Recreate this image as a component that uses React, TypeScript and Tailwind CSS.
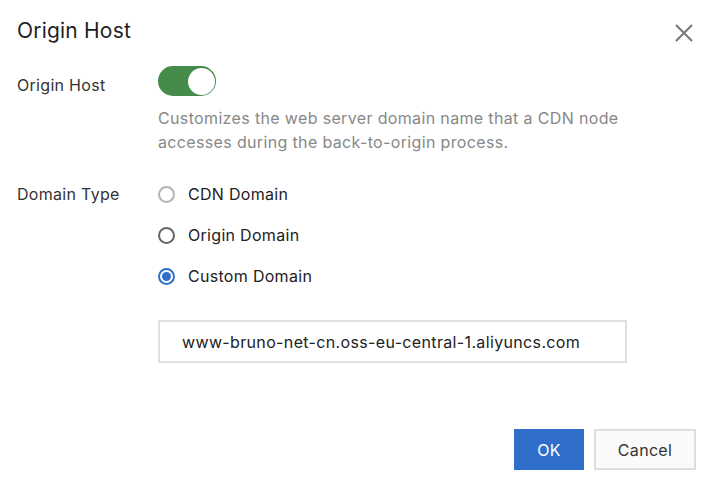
import React from "react";

export default function App() {
  const font = { fontFamily: 'Inter, "Liberation Sans", Arial, sans-serif' };
  return (
    <div className="w-[726px] h-[484px] bg-white relative text-[#333]" style={font}>
      <div className="flex items-center justify-between pl-[17px] pr-[32px] pt-[16px] h-[46px]">
        <h1 className="text-[21px] leading-[26px] text-[#1f1f1f] tracking-[0.2px]">Origin Host</h1>
        <svg width="20" height="20" viewBox="0 0 20 20" className="text-[#777] mt-[4px]">
          <path d="M2 2 L18 18 M18 2 L2 18" stroke="currentColor" strokeWidth="2" />
        </svg>
      </div>

      <div className="pl-[17px] pt-[20px] flex">
        <div className="w-[141px] text-[16px] tracking-[0.3px] text-[#333] pt-[9px] leading-[20px]">Origin Host</div>
        <div className="flex flex-col">
          <div className="w-[58px] h-[30px] rounded-full bg-[#458b4a] relative">
            <div className="absolute right-[1.5px] top-[1.5px] w-[27px] h-[27px] rounded-full bg-white"></div>
          </div>
          <p className="mt-[10px] text-[16px] leading-[24px] text-[#888] tracking-[0.35px] w-[520px]">
            Customizes the web server domain name that a CDN node
            <br />
            accesses during the back-to-origin process.
          </p>
        </div>
      </div>

      <div className="pl-[17px] pt-[28px] flex">
        <div className="w-[141px] text-[16px] tracking-[0.3px] text-[#333] leading-[24px]">Domain Type</div>
        <div className="flex flex-col gap-[17px]">
          <div className="flex items-center h-[24px]">
            <span className="w-[17px] h-[17px] rounded-full border-[2px] border-[#b3b3b3] box-border"></span>
            <span className="ml-[13px] text-[16px] tracking-[0.3px] text-[#222]">CDN Domain</span>
          </div>
          <div className="flex items-center h-[24px]">
            <span className="w-[17px] h-[17px] rounded-full border-[2px] border-[#666] box-border"></span>
            <span className="ml-[13px] text-[16px] tracking-[0.3px] text-[#222]">Origin Domain</span>
          </div>
          <div className="flex items-center h-[24px]">
            <span className="w-[17px] h-[17px] rounded-full border-[2px] border-[#2f6fcb] box-border flex items-center justify-center">
              <span className="w-[9px] h-[9px] rounded-full bg-[#2f6fcb]"></span>
            </span>
            <span className="ml-[13px] text-[16px] tracking-[0.3px] text-[#222]">Custom Domain</span>
          </div>
        </div>
      </div>

      <div className="pl-[158px] pt-[32px]">
        <div className="w-[469px] h-[43px] border-[2px] border-[#e0e0e0] flex items-center pl-[22px] text-[16px] tracking-[0.35px] text-[#222]">
          www-bruno-net-cn.oss-eu-central-1.aliyuncs.com
        </div>
      </div>

      <div className="flex justify-end gap-[10px] pr-[30px] pt-[66px]">
        <button className="w-[70px] h-[41px] bg-[#2f6fcb] text-white text-[16px] tracking-[0.3px]">OK</button>
        <button className="w-[102px] h-[41px] bg-[#fafafa] border-[2px] border-[#dedede] text-[#333] text-[16px] tracking-[0.3px]">Cancel</button>
      </div>
    </div>
  );
}
